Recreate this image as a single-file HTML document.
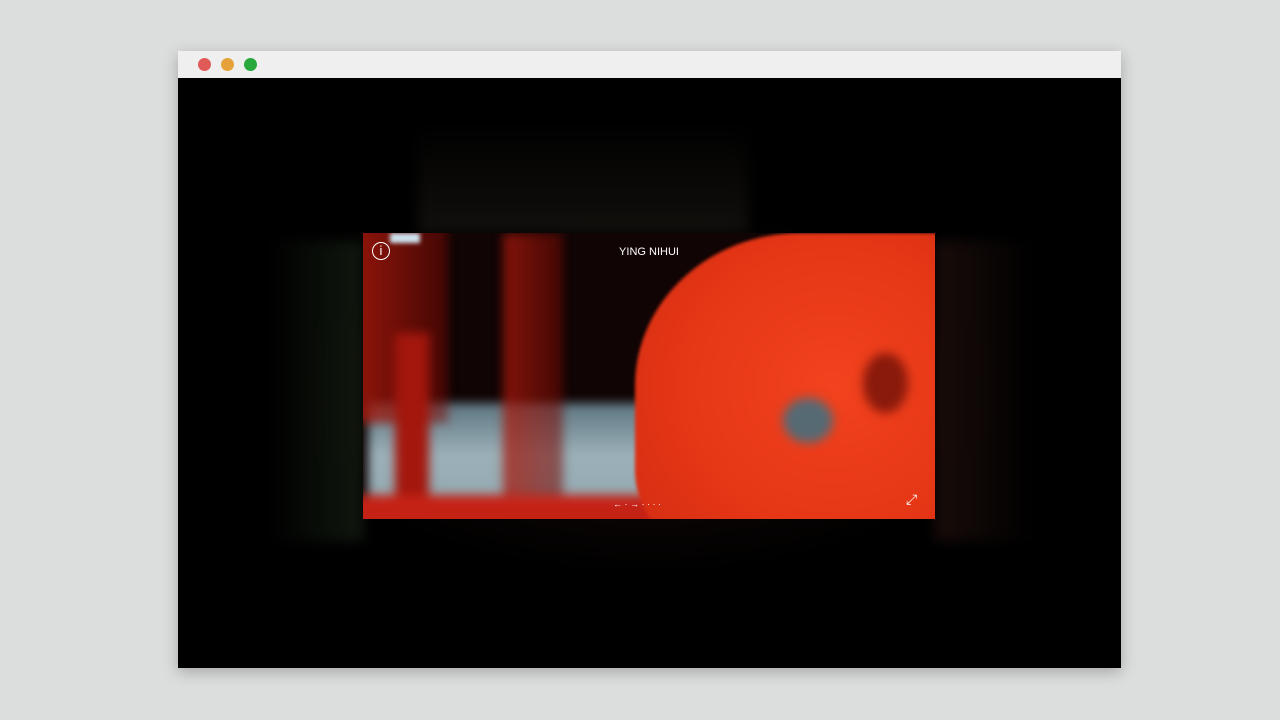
<!DOCTYPE html>
<html><head><style>
body{margin:0;width:1280px;height:720px;background:#dcdedd;position:relative;overflow:hidden;font-family:"Liberation Sans",sans-serif}
.win{position:absolute;left:178px;top:51px;width:943px;height:617px;background:#000;box-shadow:0 4px 14px rgba(0,0,0,.25)}
.bar{position:absolute;left:0;top:0;width:943px;height:27px;background:#efefef}
.d{position:absolute;top:7px;width:13px;height:13px;border-radius:50%}
.glow{position:absolute;left:88px;top:150px;width:760px;height:380px;background:radial-gradient(ellipse at 50% 50%,rgba(40,20,15,.6),rgba(0,0,0,0) 70%)}
.side{position:absolute;top:190px;height:300px;filter:blur(6px)}
.img{position:absolute;left:185px;top:182px;width:572px;height:286px;overflow:hidden;background:#100404}
.img div{position:absolute}
.b{filter:blur(5px)}
</style></head><body>
<div class="win">
<div class="bar">
<div class="d" style="left:20px;background:#e05b57"></div>
<div class="d" style="left:43px;background:#e5a23a"></div>
<div class="d" style="left:66px;background:#29a83c"></div>
</div>
<div class="glow"></div>
<div class="side" style="left:90px;width:95px;background:linear-gradient(90deg,rgba(0,0,0,0),rgba(20,30,18,.8))"></div>
<div class="side" style="left:757px;width:100px;background:linear-gradient(90deg,rgba(30,15,12,.8),rgba(0,0,0,0))"></div>
<div class="side" style="left:240px;top:70px;width:330px;height:112px;background:linear-gradient(180deg,rgba(0,0,0,0),rgba(25,22,18,.7))"></div>
<div class="img">
<div class="b" style="left:5px;top:170px;width:290px;height:130px;background:linear-gradient(180deg,#5d7580,#9bb0b8 40%,#8ea3ab)"></div>
<div class="b" style="left:-10px;top:-10px;width:95px;height:200px;background:linear-gradient(90deg,rgba(170,25,12,.85),rgba(120,10,5,.5))"></div>
<div class="b" style="left:32px;top:100px;width:34px;height:190px;background:#a3170d"></div>
<div class="b" style="left:140px;top:0;width:60px;height:270px;background:linear-gradient(90deg,rgba(170,25,12,.75),rgba(110,10,5,.55))"></div>
<div class="b" style="left:-10px;top:262px;width:320px;height:40px;background:#c52216"></div>
<div style="left:27px;top:0;width:30px;height:10px;background:#cfe4f0;filter:blur(2px)"></div>
<div style="left:272px;top:0;width:330px;height:340px;background:radial-gradient(ellipse at 60% 45%,#f2421e,#e53616 55%,#cf2a12);border-radius:50% 0 0 40%/45% 0 0 30%;filter:blur(1.5px)"></div>
<div class="b" style="left:420px;top:165px;width:50px;height:45px;border-radius:50%;background:#566a74"></div>
<div class="b" style="left:500px;top:120px;width:45px;height:60px;border-radius:50%;background:#8a1a0c"></div>
<div style="left:0;top:0;width:572px;height:286px;color:#fff;font-size:11px;text-align:center;line-height:38px">YING NIHUI</div>
<div style="left:9px;top:9px;width:18px;height:18px;border:1.5px solid #fff;border-radius:50%;color:#fff;font-size:13px;text-align:center;line-height:16px;box-sizing:border-box">i</div>
<div style="left:250px;top:266px;color:#fff;font-size:9px">← · → · · · ·</div>
<div style="left:543px;top:258px;color:#fff;font-size:14px">⤢</div>
</div>
</div>
</body></html>
